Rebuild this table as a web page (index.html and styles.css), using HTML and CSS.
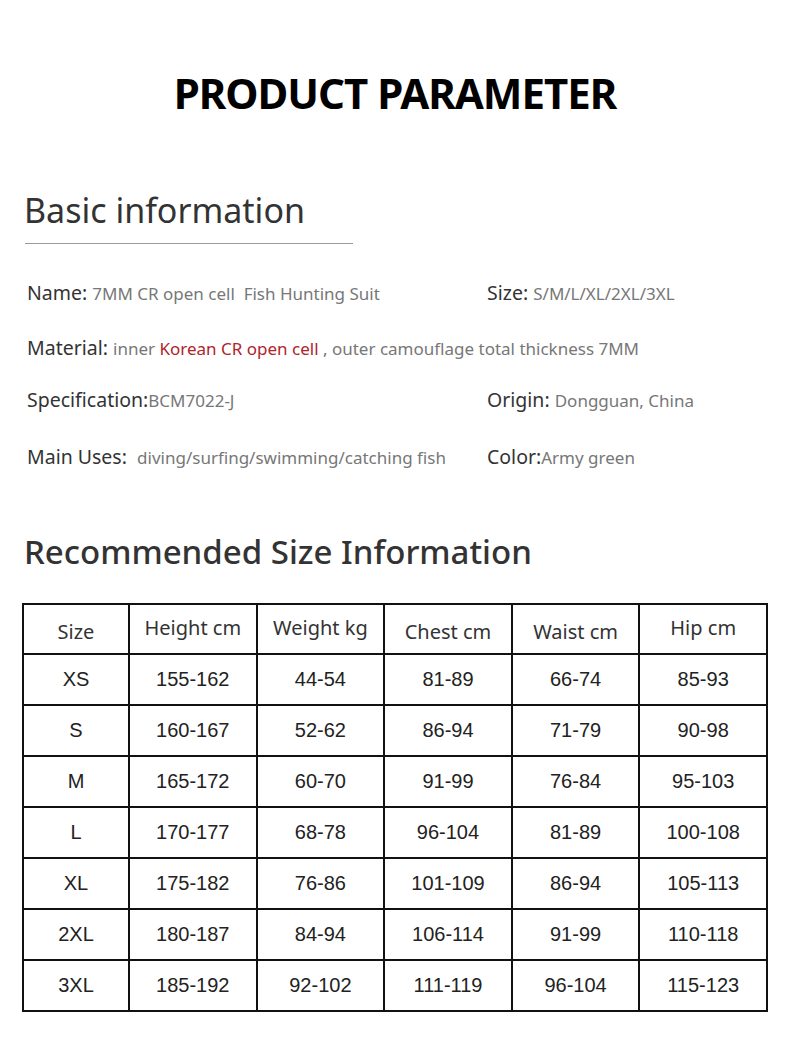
FILE: index.html
```html
<!DOCTYPE html>
<html>
<head>
<meta charset="utf-8">
<link rel="stylesheet" href="styles.css">
</head>
<body>
<div class="page">
  <h1 class="title">PRODUCT PARAMETER</h1>

  <section class="basic">
    <h2 class="section-title">Basic information</h2>
    <div class="rule"></div>
    <div class="info">
      <div class="row r1">
        <div class="cell"><span class="label">Name:</span> <span class="val">7MM CR open cell&nbsp; Fish Hunting Suit</span></div>
        <div class="cell"><span class="label">Size:</span> <span class="val">S/M/L/XL/2XL/3XL</span></div>
      </div>
      <div class="row r2">
        <div class="cell wide"><span class="label">Material:</span> <span class="val">inner <span class="red">Korean CR open cell</span> , outer camouflage total thickness 7MM</span></div>
      </div>
      <div class="row r3">
        <div class="cell"><span class="label">Specification:</span><span class="val">BCM7022-J</span></div>
        <div class="cell"><span class="label">Origin:</span> <span class="val">Dongguan, China</span></div>
      </div>
      <div class="row r4">
        <div class="cell"><span class="label">Main Uses:</span>&nbsp; <span class="val">diving/surfing/swimming/catching fish</span></div>
        <div class="cell"><span class="label">Color:</span><span class="val">Army green</span></div>
      </div>
    </div>
  </section>

  <section class="sizes">
    <h2 class="section-title big">Recommended Size Information</h2>
    <table class="size-table">
      <thead>
        <tr><th class="c-size low">Size</th><th>Height cm</th><th>Weight kg</th><th class="low">Chest cm</th><th class="low">Waist cm</th><th>Hip cm</th></tr>
      </thead>
      <tbody>
        <tr><td>XS</td><td>155-162</td><td>44-54</td><td>81-89</td><td>66-74</td><td>85-93</td></tr>
        <tr><td>S</td><td>160-167</td><td>52-62</td><td>86-94</td><td>71-79</td><td>90-98</td></tr>
        <tr><td>M</td><td>165-172</td><td>60-70</td><td>91-99</td><td>76-84</td><td>95-103</td></tr>
        <tr><td>L</td><td>170-177</td><td>68-78</td><td>96-104</td><td>81-89</td><td>100-108</td></tr>
        <tr><td>XL</td><td>175-182</td><td>76-86</td><td>101-109</td><td>86-94</td><td>105-113</td></tr>
        <tr><td>2XL</td><td>180-187</td><td>84-94</td><td>106-114</td><td>91-99</td><td>110-118</td></tr>
        <tr><td>3XL</td><td>185-192</td><td>92-102</td><td>111-119</td><td>96-104</td><td>115-123</td></tr>
      </tbody>
    </table>
  </section>
</div>
</body>
</html>
```

FILE: styles.css
```css
* { box-sizing: border-box; }
html, body { margin: 0; padding: 0; background: #fff; }
body { font-family: "Noto Sans", "Open Sans", sans-serif; color: #333; }
.page { width: 790px; height: 1044px; overflow: hidden; }

.title {
  margin: 0;
  padding-top: 69px;
  text-align: center;
  font-size: 42px;
  line-height: 48px;
  font-weight: 700;
  color: #000;
  letter-spacing: -1px;
}

.section-title {
  margin: 0;
  font-weight: 400;
  color: #333;
}
.basic .section-title {
  margin-top: 72px;
  padding-left: 24px;
  font-size: 34px;
  line-height: 42px;
}
.rule {
  margin: 12px 0 0 25px;
  width: 328px;
  height: 1px;
  background: #9a9a9a;
}

.info {
  padding-left: 27px;
  margin-top: 35px;
}
.row {
  display: grid;
  grid-template-columns: 460px 1fr;
  align-items: start;
}
.r1 { height: 55px; }
.r2 { height: 52px; }
.r3 { height: 57px; }
.r4 { height: 54px; }
.cell { font-size: 19.5px; line-height: 28px; white-space: nowrap; }
.cell.wide { grid-column: 1 / 3; }
.label { color: #333; }
.val { color: #777; font-size: 17px; }
.red { color: #b0232a; }

.sizes .section-title.big {
  margin-top: 35px;
  padding-left: 24px;
  font-size: 33px;
  line-height: 40px;
  font-weight: 500;
}

.size-table {
  margin: 31px 0 0 22px;
  border-collapse: collapse;
  width: 746px;
  table-layout: fixed;
}
.size-table th, .size-table td {
  border: 2px solid #111;
  text-align: center;
  height: 51px;
  padding: 0;
  color: #222;
  font-size: 20px;
  font-weight: 400;
}
.size-table th { height: 50px; font-family: "Noto Sans", sans-serif; color: #333; padding-bottom: 4px; }
.size-table th.low { padding-bottom: 0; padding-top: 4px; }
.size-table th:first-child { width: 106px; }
.size-table td { font-family: "Liberation Sans", Arial, sans-serif; }
```
